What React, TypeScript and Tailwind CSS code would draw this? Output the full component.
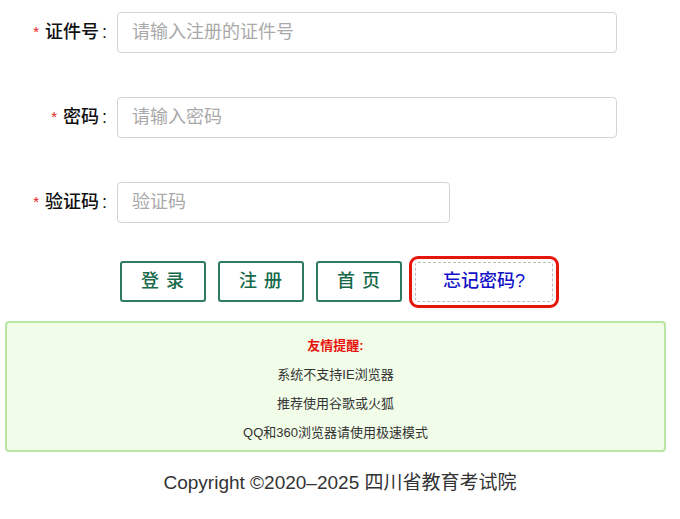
import React from 'react';

const font = {
  fontFamily: '"Liberation Sans", "Noto Sans CJK SC", sans-serif',
};

interface FieldProps {
  label: string;
  placeholder: string;
  width: string;
  type?: string;
}

function Field({ label, placeholder, width, type = 'text' }: FieldProps) {
  return (
    <div className="flex items-center h-[41px]">
      <label className="w-[107px] flex items-center justify-end text-[18px] font-medium text-[#111]">
        <span className="text-[#e4211b] text-[15px] mr-[6px]">*</span>
        <span>{label}</span>
        <span className="ml-[3px]">:</span>
      </label>
      <input
        type={type}
        placeholder={placeholder}
        className={`${width} ml-[10px] h-[41px] rounded-[4px] border-[1.5px] border-[#d4d4d4] bg-white px-[14px] text-[18px] text-[#333] placeholder:text-[#a9a9a9] outline-none`}
      />
    </div>
  );
}

export default function App() {
  return (
    <div className="w-[680px] h-[519px] bg-white" style={font}>
      <div className="flex flex-col gap-[44px] pt-[12px]">
        <Field label="证件号" placeholder="请输入注册的证件号" width="w-[500px]" />
        <Field label="密码" placeholder="请输入密码" width="w-[500px]" type="password" />
        <Field label="验证码" placeholder="验证码" width="w-[333px]" />
      </div>

      <div className="flex items-center gap-[12px] pl-[120px] mt-[38px]">
        {['登 录', '注 册', '首 页'].map((t) => (
          <button
            key={t}
            className="w-[86px] h-[41px] rounded-[3px] border-2 border-[#2f7b5d] bg-white text-[18px] font-medium tracking-[1px] text-[#16694a] whitespace-pre"
          >
            {t}
          </button>
        ))}
        <button className="w-[138px] h-[40px] ml-[1px] rounded-[3px] border border-dashed border-[#bdbdbd] bg-white text-[18px] font-medium text-[#1212c8] outline-[3px] outline-solid outline-[#e5140c] outline-offset-[3px]">
          忘记密码?
        </button>
      </div>

      <div className="mx-[5px] w-[661px] mt-[19px] rounded-[4px] border-2 border-[#b9e6a3] bg-[#f2fde9] pt-[8px] pb-[3px] text-center text-[13px] leading-[29px] text-[#333]">
        <p className="font-bold text-[#e8120c]">友情提醒:</p>
        <p>系统不支持IE浏览器</p>
        <p>推荐使用谷歌或火狐</p>
        <p>QQ和360浏览器请使用极速模式</p>
      </div>

      <p className="mt-[22px] text-center text-[19px] leading-[18px] text-[#333]">
        Copyright ©2020–2025 四川省教育考试院
      </p>
    </div>
  );
}
